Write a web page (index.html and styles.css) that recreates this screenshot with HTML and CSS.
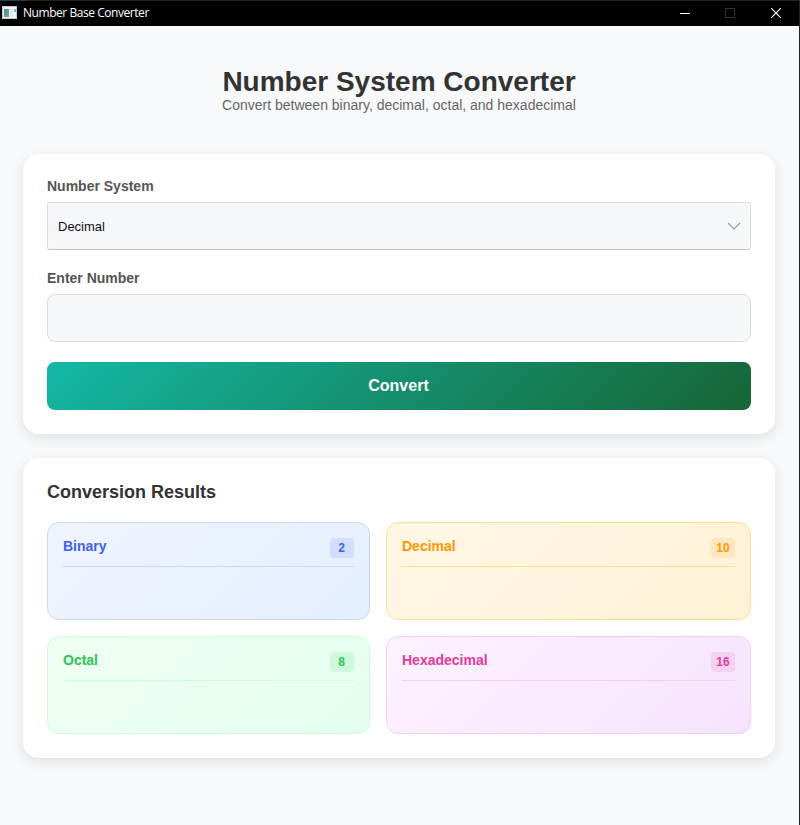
FILE: index.html
```html
<!DOCTYPE html>
<html lang="en">
<head>
<meta charset="utf-8">
<title>Number Base Converter</title>
<link rel="stylesheet" href="styles.css">
</head>
<body>
<div class="window">
  <header class="titlebar">
    <svg class="app-icon" width="15" height="13" viewBox="0 0 15 13">
      <defs><linearGradient id="pane" x1="0" y1="0" x2="1" y2="1"><stop offset="0" stop-color="#4f86b0"/><stop offset="1" stop-color="#64b87c"/></linearGradient></defs>
      <rect width="15" height="13" fill="#c9c9cc"/>
      <rect x="1" y="1" width="13" height="11" fill="#f2f2f2"/>
      <rect x="2" y="3" width="5" height="8" fill="url(#pane)"/>
      <rect x="8" y="3" width="3" height="8" fill="#e6e6e6"/>
      <rect x="12" y="3" width="2" height="3" fill="#80b5a0"/>
    </svg>
    <span class="app-name">Number Base Converter</span>
    <div class="controls">
      <svg width="10" height="10" viewBox="0 0 10 10"><path d="M0 5.5H10" stroke="#fff"/></svg>
      <svg width="10" height="10" viewBox="0 0 10 10"><path d="M.5.5H9.5V9.5H.5Z" fill="none" stroke="#333"/></svg>
      <svg width="10" height="10" viewBox="0 0 10 10"><path d="M.2.2L9.8 9.8M9.8.2L.2 9.8" stroke="#fff" stroke-width="1.2"/></svg>
    </div>
  </header>
  <main class="content">
    <div class="heading">
      <h1>Number System Converter</h1>
      <p>Convert between binary, decimal, octal, and hexadecimal</p>
    </div>
    <section class="card form">
      <div class="label">Number System</div>
      <div class="select">
        <div class="select-fill">
          <span>Decimal</span>
          <svg width="14" height="8" viewBox="0 0 14 8"><path d="M1 1L7 7L13 1" fill="none" stroke="#999" stroke-width="1.1"/></svg>
        </div>
      </div>
      <div class="label">Enter Number</div>
      <input class="number" type="text" aria-label="Enter Number">
      <button class="convert">Convert</button>
    </section>
    <section class="card results">
      <h2>Conversion Results</h2>
      <div class="grid">
        <div class="result binary"><div class="result-head"><span>Binary</span><b class="badge single">2</b></div></div>
        <div class="result decimal"><div class="result-head"><span>Decimal</span><b class="badge">10</b></div></div>
        <div class="result octal"><div class="result-head"><span>Octal</span><b class="badge single">8</b></div></div>
        <div class="result hex"><div class="result-head"><span>Hexadecimal</span><b class="badge">16</b></div></div>
      </div>
    </section>
  </main>
</div>
</body>
</html>
```
FILE: styles.css
```css
* { box-sizing: border-box; }
body { margin: 0; font-family: "Liberation Sans", Arial, sans-serif; overflow: hidden; }
.window { height: 825px; background: #f8f9fb; border-right: 1px solid #252525; }
.titlebar {
  height: 26px; color: #fff;
  background: linear-gradient(90deg, #1d4058 26px, #222526 26px) top / 100% 1px no-repeat #000;
  display: flex; align-items: center; padding: 1px 18px 0 2px;
}
.app-icon { display: block; margin-bottom: 2px; }
.app-name { font: 12px/16px "Open Sans", sans-serif; letter-spacing: -.45px; margin: 0 0 1px 6px; }
.controls { margin: 0 0 2px auto; display: flex; gap: 35px; }
.controls svg { display: block; }
.controls svg:last-child { margin-left: 1px; }
.content { padding: 40px 24px 0 23px; }
.heading { height: 88px; text-align: center; }
h1 { margin: 0; font-size: 28px; line-height: 32px; color: #333; }
.heading p { margin: -1px 0 0; font-size: 14px; line-height: 16px; color: #666; }
.card {
  background: #fff; border-radius: 16px; padding: 24px;
  box-shadow: 0 4px 14px rgba(0, 0, 0, .1);
}
.form { height: 280px; margin-bottom: 24px; display: flex; flex-direction: column; }
.label { font-size: 14px; font-weight: bold; line-height: 16px; color: #555; margin-bottom: 8px; }
.select {
  height: 48px; flex: none; border: 1px solid #ddd; border-bottom-color: #c6c6c6;
  border-radius: 3px; background: #fafafa; margin-bottom: 20px;
}
.select-fill {
  height: 46px; background: #f6f7fa; border-radius: 7px; padding: 0 9px 0 10px;
  display: flex; align-items: center; justify-content: space-between;
  font: 13px/16px "Liberation Sans", Arial, sans-serif; color: #111;
}
.select-fill span { padding-top: 2px; }
.number {
  width: 100%; height: 48px; flex: none; margin: 0 0 20px; padding: 0 12px;
  border: 1px solid #ddd; border-radius: 8px; background: #f5f7fb; outline: none;
}
.convert {
  height: 48px; flex: none; border: 0; border-radius: 8px; padding: 0 1px 0 0;
  color: #fff; font: bold 16px "Liberation Sans", Arial, sans-serif;
  background: linear-gradient(135deg, #14b8a6, #166534);
}
.results { height: 300px; }
h2 { margin: 0 0 20px; font-size: 18px; line-height: 20px; color: #333; }
.grid { display: grid; grid-template-columns: 323px 365px; grid-auto-rows: 98px; gap: 16px; }
.result { border: 1px solid var(--line); border-radius: 12px; padding: 15px; color: var(--ink); }
.result-head {
  height: 29px; border-bottom: 1px solid var(--line);
  display: flex; justify-content: space-between;
}
.result-head span { font-size: 14px; font-weight: bold; line-height: 16px; }
.badge {
  width: 24px; height: 20px; border-radius: 4px; background: var(--tint);
  font-size: 12px; line-height: 20px; text-align: center;
}
.single { padding-right: 1px; }
.binary { --ink: #4361ee; --line: #cdd6fb; --tint: rgba(67, 97, 238, .12); background: linear-gradient(135deg, #f0f4ff, #e4efff); }
.decimal { --ink: #ff9800; --line: #ffdf94; --tint: rgba(255, 152, 0, .13); background: linear-gradient(135deg, #fff7e6, #fff2d6); }
.octal { --ink: #2dc653; --line: #ccffd5; --tint: rgba(45, 198, 83, .13); background: linear-gradient(135deg, #f0fff4, #e3ffef); }
.hex { --ink: #e6399b; --line: #f0cffc; --tint: rgba(230, 57, 155, .12); background: linear-gradient(135deg, #fdf2ff, #f6e4fe); }
```
